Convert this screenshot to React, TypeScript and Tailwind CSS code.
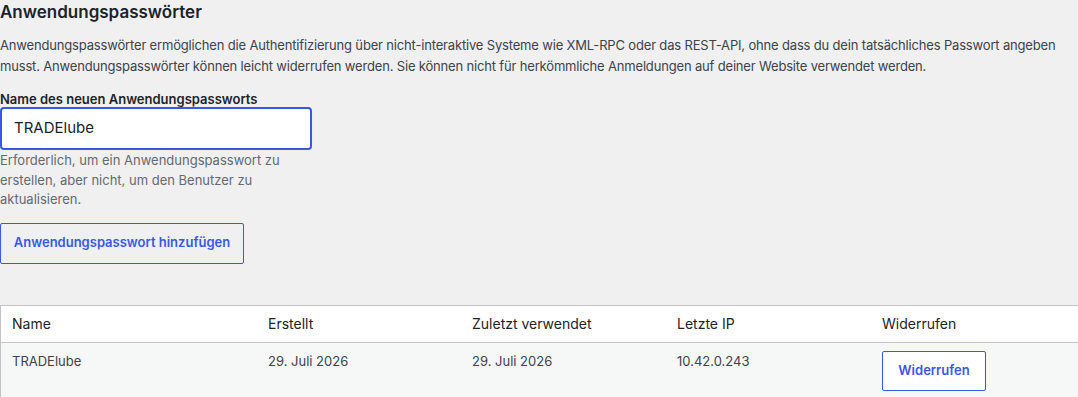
export default function App() {
  return (
    <div
      className="min-h-[397px] w-[1078px] overflow-hidden bg-[#f0f0f1] text-[#1d2327]"
      style={{ fontFamily: 'Inter, "Noto Sans", sans-serif' }}
    >
      <h2 className="pt-[1px] text-[17px] font-semibold leading-[22px]">Anwendungspasswörter</h2>
      <p className="mt-[12px] w-[1078px] text-[13px] leading-[21px] tracking-[-0.013em] text-[#3c434a]">
        Anwendungspasswörter ermöglichen die Authentifizierung über nicht-interaktive Systeme wie XML-RPC oder das REST-API, ohne dass du dein tatsächliches Passwort angeben musst. Anwendungspasswörter können leicht widerrufen werden. Sie können nicht für herkömmliche Anmeldungen auf deiner Website verwendet werden.
      </p>

      <label className="mt-[12px] block text-[13px] font-semibold leading-[20px] text-[#1d2327]">
        Name des neuen Anwendungspassworts
      </label>
      <div className="mt-[-2px] flex h-[43px] w-[312px] items-center rounded-[4px] border-2 border-[#3858e9] bg-white px-[12px] text-[15px] text-[#1d2327]">
        TRADElube
      </div>
      <p className="mt-[1px] w-[290px] text-[13px] leading-[19.5px] text-[#646970]">
        Erforderlich, um ein Anwendungspasswort zu erstellen, aber nicht, um den Benutzer zu aktualisieren.
      </p>
      <button className="mt-[13px] flex h-[41px] w-[244px] items-center justify-center rounded-[2px] border border-[#3858e9] text-[13px] font-semibold text-[#3858e9]">
        Anwendungspasswort hinzufügen
      </button>

      <div className="mt-[41px] w-[1080px] border border-[#c3c4c7]">
        <div className="grid h-[37px] grid-cols-[257px_204px_205px_205px_1fr] items-center border-b border-[#c3c4c7] bg-white text-[14px] text-[#1d2327]">
          <div className="pl-[11px]">Name</div>
          <div className="pl-[10px]">Erstellt</div>
          <div className="pl-[10px]">Zuletzt verwendet</div>
          <div className="pl-[10px]">Letzte IP</div>
          <div className="pl-[10px]">Widerrufen</div>
        </div>
        <div className="grid h-[60px] grid-cols-[257px_204px_205px_205px_1fr] items-start bg-[#f6f7f7] pt-[8px] text-[13px] text-[#3c434a]">
          <div className="pl-[11px] leading-[20px]">TRADElube</div>
          <div className="pl-[10px] leading-[20px]">29. Juli 2026</div>
          <div className="pl-[10px] leading-[20px]">29. Juli 2026</div>
          <div className="pl-[10px] leading-[20px]">10.42.0.243</div>
          <div className="pl-[10px]">
            <button className="flex h-[40px] w-[104px] items-center justify-center rounded-[2px] border border-[#3858e9] bg-white text-[13px] font-semibold text-[#3858e9]">
              Widerrufen
            </button>
          </div>
        </div>
      </div>
    </div>
  )
}
